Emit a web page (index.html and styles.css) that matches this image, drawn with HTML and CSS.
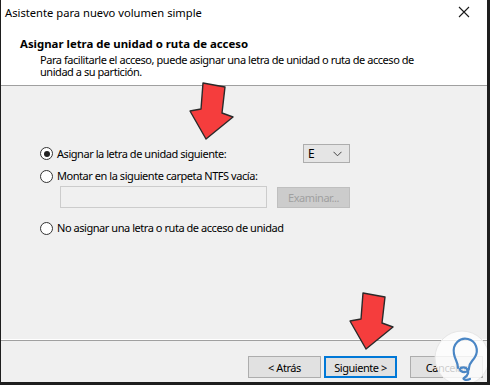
FILE: index.html
```html
<!DOCTYPE html>
<html lang="es">
<head>
<meta charset="utf-8">
<title>Asistente para nuevo volumen simple</title>
<link rel="stylesheet" href="styles.css">
</head>
<body>
<div class="window">
  <div class="titlebar">
    <span class="title">Asistente para nuevo volumen simple</span>
    <svg class="close" width="12" height="12" viewBox="0 0 12 12"><path d="M1 1L11 11M11 1L1 11" stroke="#1a1a1a" stroke-width="1.1" fill="none"/></svg>
  </div>
  <div class="header">
    <div class="h-title">Asignar letra de unidad o ruta de acceso</div>
    <div class="h-desc">Para facilitarle el acceso, puede asignar una letra de unidad o ruta de acceso de<br>unidad a su partición.</div>
  </div>
  <div class="content">
    <div class="row">
      <label class="opt"><span class="radio checked"></span>Asignar la letra de unidad siguiente:</label>
      <div class="combo"><span>E</span><svg width="9" height="6" viewBox="0 0 9 6"><path d="M0.5 0.8L4.5 4.8L8.5 0.8" stroke="#444" stroke-width="1" fill="none"/></svg></div>
    </div>
    <label class="opt opt2"><span class="radio"></span>Montar en la siguiente carpeta NTFS vacía:</label>
    <div class="pathrow">
      <div class="pathbox"></div>
      <div class="btn disabled">Examinar...</div>
    </div>
    <label class="opt opt3"><span class="radio"></span>No asignar una letra o ruta de acceso de unidad</label>
  </div>
  <div class="footer">
    <div class="btn">&lt; Atrás</div>
    <div class="btn default">Siguiente &gt;</div>
    <div class="btn cancel">Cancelar</div>
  </div>
  <svg class="arrow arrow1" width="50" height="62" viewBox="0 0 50 62"><polygon points="14,1 36,5 33,31 44,35 17,57 1,29 12,27" fill="#f53d3d" stroke="#2a2a2a" stroke-width="1.4" stroke-linejoin="round"/></svg>
  <svg class="arrow arrow2" width="50" height="62" viewBox="0 0 50 62"><polygon points="14,1 36,5 33,31 44,35 17,57 1,29 12,27" fill="#f53d3d" stroke="#2a2a2a" stroke-width="1.4" stroke-linejoin="round"/></svg>
  <svg class="mark" width="56" height="56" viewBox="0 0 56 56"><circle cx="28" cy="28" r="27" fill="#ffffff" fill-opacity="0.8" stroke="#e6e6e6" stroke-width="1"/><path d="M20 24C18 14 26 7 34 9C42 11 45 20 41 27C38 32 35 33 35 38C35 42 30 43 27 41C24 39 28 36 32 38C36 41 34 46 30 48C28 49 32 51 36 49" stroke="#4a86c5" stroke-width="2.2" fill="none" stroke-linecap="round" stroke-linejoin="round"/><path d="M20 24C21 30 24 32 24 38" stroke="#4a86c5" stroke-width="2.2" fill="none" stroke-linecap="round"/></svg>
</div>
</body>
</html>
```
FILE: styles.css
```css
html, body {
  margin: 0;
  padding: 0;
  background: #1e1e1e;
}
.window {
  position: relative;
  width: 486px;
  height: 382px;
  margin-left: 1px;
  background: #f0f0f0;
  font-family: "Noto Sans", "Liberation Sans", sans-serif;
  font-size: 11px;
  letter-spacing: -0.45px;
  color: #000;
  display: flex;
  flex-direction: column;
  overflow: hidden;
}
.titlebar {
  height: 26px;
  background: #fff;
  display: flex;
  align-items: center;
  justify-content: space-between;
  padding: 0 17px 0 4px;
  flex: none;
}
.title {
  font-size: 11.2px;
  letter-spacing: 0;
  line-height: 16px;
  margin-top: -1px;
}
.close {
  display: block;
  margin-top: -2px;
}
.header {
  background: #fff;
  height: 60px;
  padding: 10px 0 0 19px;
  box-sizing: border-box;
  border-bottom: 1px solid #a0a0a0;
  flex: none;
}
.h-title {
  font-weight: bold;
  font-size: 11.4px;
  letter-spacing: 0;
  line-height: 16px;
}
.h-desc {
  padding-left: 20px;
  line-height: 12px;
  margin-top: 2px;
  white-space: nowrap;
}
.content {
  flex: 1;
  display: flex;
  flex-direction: column;
  padding: 58px 0 0 39px;
  border-bottom: 1px solid #ffffff;
}
.row {
  display: flex;
  align-items: center;
  justify-content: space-between;
  width: 310px;
}
.opt {
  display: flex;
  align-items: center;
  line-height: 16px;
  gap: 4px;
}
.radio {
  width: 11px;
  height: 11px;
  border: 1px solid #333;
  border-radius: 50%;
  background: #fff;
  box-sizing: content-box;
  position: relative;
  flex: none;
}
.radio.checked::after {
  content: "";
  position: absolute;
  left: 2.5px;
  top: 2.5px;
  width: 6px;
  height: 6px;
  border-radius: 50%;
  background: #222;
}
.combo {
  width: 47px;
  height: 19px;
  border: 1px solid #adadad;
  background: #e5e5e5;
  display: flex;
  align-items: center;
  justify-content: space-between;
  padding: 0 7px 0 4px;
  box-sizing: border-box;
  font-size: 12px;
  letter-spacing: 0;
}
.opt2 {
  margin-top: 5px;
}
.pathrow {
  display: flex;
  align-items: center;
  gap: 10px;
  margin: 2px 0 0 20px;
}
.pathbox {
  width: 207px;
  height: 22px;
  box-sizing: border-box;
  border: 1px solid #cccccc;
  background: #f0f0f0;
  flex: none;
}
.btn {
  width: 73px;
  height: 22px;
  border: 1px solid #adadad;
  background: #e1e1e1;
  box-sizing: border-box;
  display: flex;
  align-items: center;
  justify-content: center;
  flex: none;
}
.btn.disabled {
  border-color: #bfbfbf;
  background: #cccccc;
  color: #a0a0a0;
  height: 21px;
}
.opt3 {
  margin-top: 12px;
}
.footer {
  height: 42px;
  border-top: 1px solid #a0a0a0;
  flex: none;
  display: flex;
  align-items: flex-start;
  padding: 15px 0 0 247px;
  box-sizing: border-box;
  gap: 3px;
}
.btn.default {
  border: 2px solid #0078d7;
}
.btn.cancel {
  margin-left: 10px;
}
.arrow {
  position: absolute;
}
.arrow1 {
  left: 188px;
  top: 82px;
}
.arrow2 {
  left: 348px;
  top: 292px;
}
.mark {
  position: absolute;
  left: 433px;
  top: 330px;
}
```
